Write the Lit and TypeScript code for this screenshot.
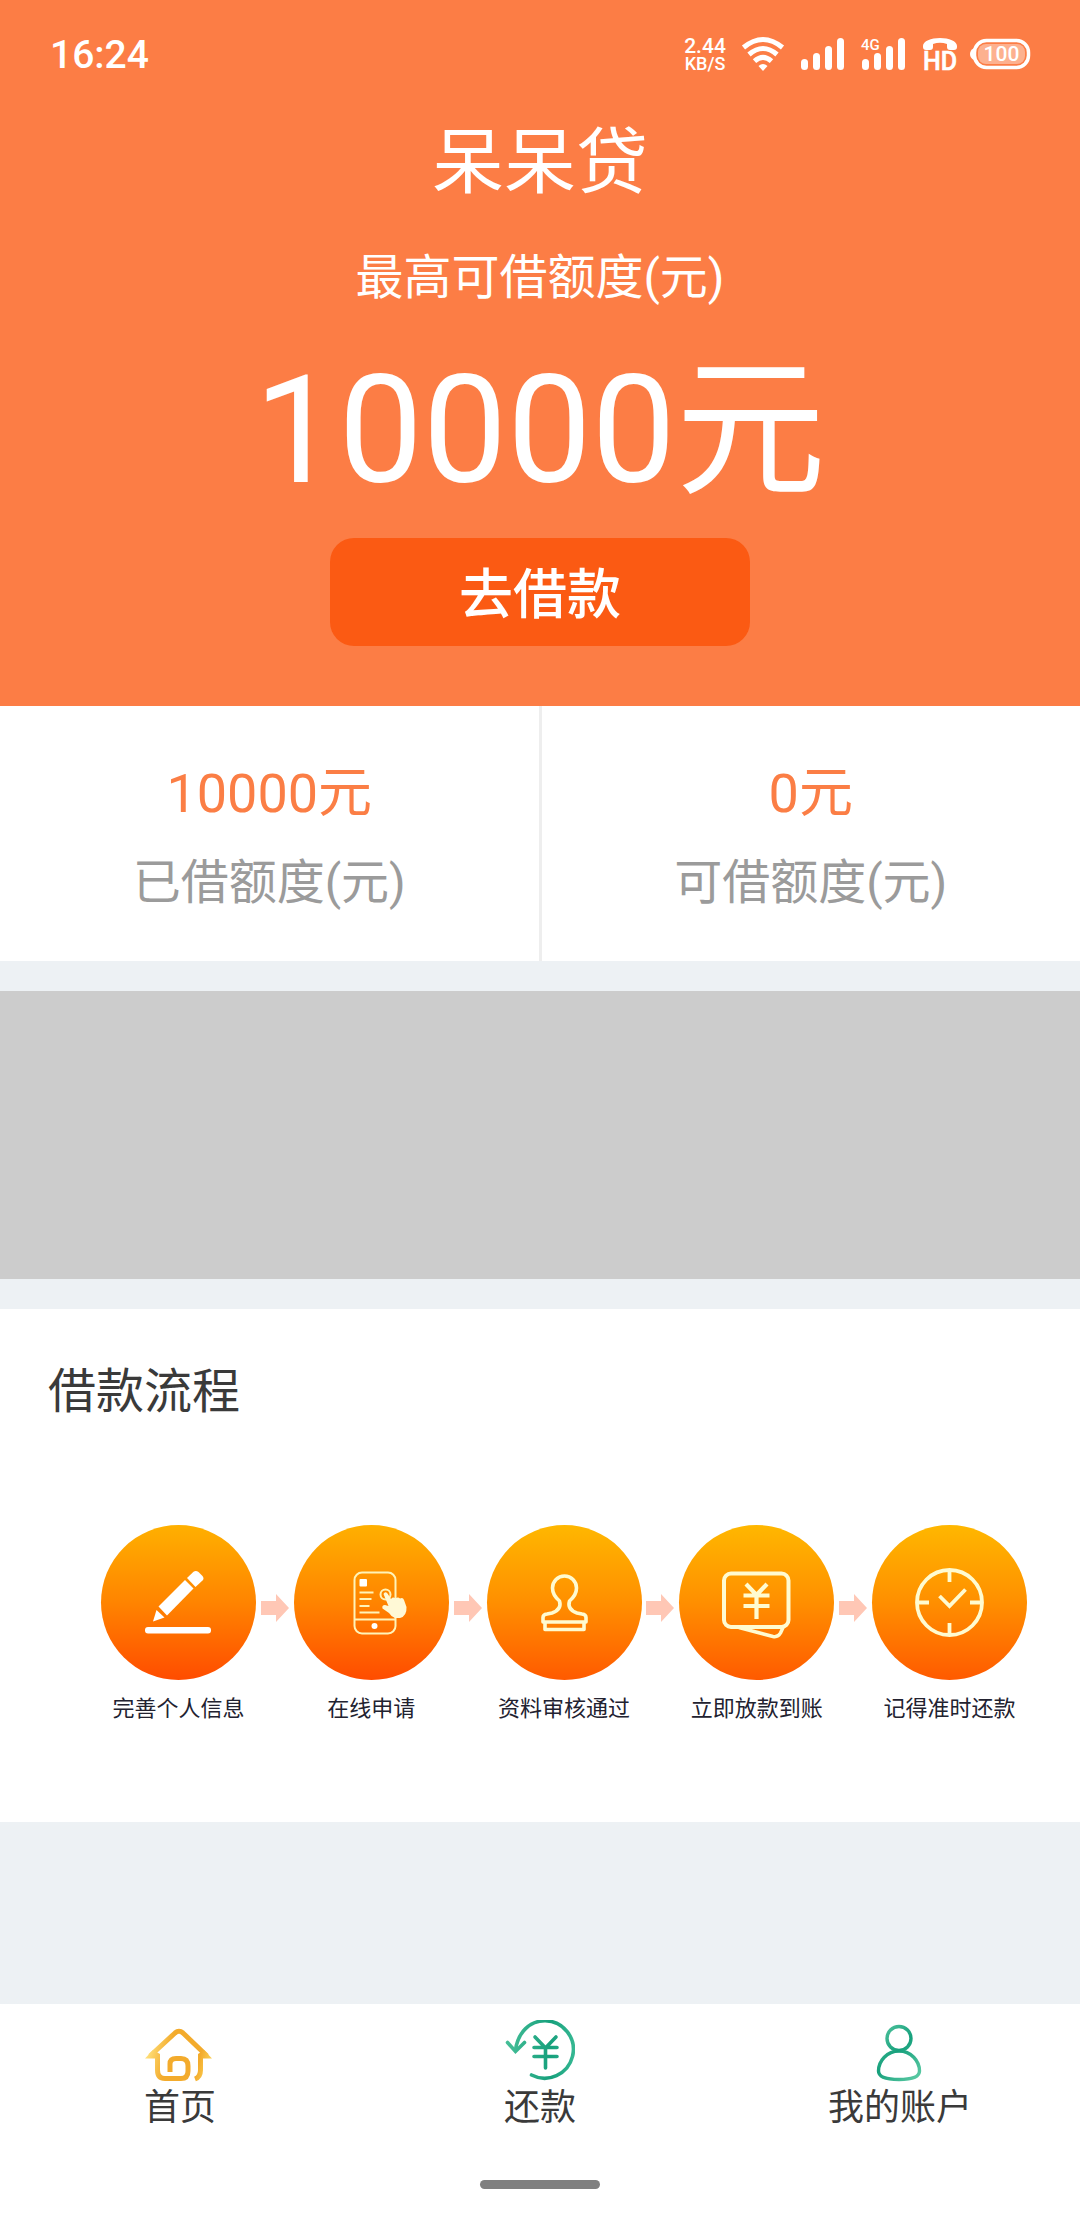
import { LitElement, html, css, svg } from "lit";
import { customElement } from "lit/decorators.js";

const bars = svg`
  <rect x="0" y="21" width="7" height="11" rx="3.5" />
  <rect x="12" y="15" width="7" height="17" rx="3.5" />
  <rect x="24" y="8" width="7" height="24" rx="3.5" />
  <rect x="36" y="0" width="7" height="32" rx="3.5" />`;

@customElement("status-bar")
class StatusBar extends LitElement {
  static styles = css`
    :host {
      display: flex;
      align-items: center;
      justify-content: space-between;
      height: 108px;
      padding: 0 50px;
      color: #fff;
      font-weight: 500;
      font-family: Roboto, sans-serif;
    }
    .time {
      font-size: 39px;
      line-height: 48px;
      padding-top: 2px;
    }
    .icons {
      display: flex;
      align-items: center;
      gap: 16px;
    }
    .speed {
      display: flex;
      flex-direction: column;
      align-items: center;
      width: 42px;
      font-size: 21px;
      line-height: 19px;
    }
    .unit {
      font-size: 18px;
      line-height: 16px;
    }
    svg {
      display: block;
      fill: #fff;
      overflow: visible;
    }
    text {
      font-family: Roboto, sans-serif;
      font-weight: 500;
    }
  `;
  render() {
    return html`
      <span class="time">16:24</span>
      <div class="icons">
        <span class="speed"><span>2.44</span><span class="unit">KB/S</span></span>
        <svg width="42" height="34" viewBox="0 0 42 34" aria-label="Wi-Fi">
          <g fill="none" stroke="#fff" stroke-width="5">
            <path d="M1.500 10.500Q21 -5.500 40.500 10.500" />
            <path d="M7 17.500Q21 5.500 35 17.500" />
            <path d="M12.500 24.200Q21 16.500 29.500 24.200" />
          </g>
          <path d="M16.500 29Q21 25 25.500 29L21 34Z" />
        </svg>
        <svg width="44" height="32" viewBox="-1 0 44 32" aria-label="Signal">${bars}</svg>
        <svg width="44" height="32" viewBox="-2 0 44 32" aria-label="4G signal">
          ${bars}
          <text x="-1" y="12" font-size="15">4G</text>
        </svg>
        <svg width="34" height="32" viewBox="-3 0 34 32" aria-label="HD voice">
          <path d="M0 8C0 3 8 0 17 0S34 3 34 8V9Q34 12 31 12H27Q24 12 24 9V6Q17 3.500 10 6V9Q10 12 7 12H3Q0 12 0 9Z" />
          <text x="17" y="32" font-size="25" stroke="#fff" stroke-width="0.600" text-anchor="middle">HD</text>
        </svg>
        <svg width="60" height="32" viewBox="0 0 60 32" aria-label="Battery">
          <path d="M4 10Q0 12 0 16T4 22Z" />
          <rect x="4.500" y="2.500" width="54" height="27" rx="12" fill="none" stroke="#fff" stroke-width="3.500" />
          <rect x="8" y="6" width="47" height="20" rx="8" fill-opacity=".4" />
          <text x="31.500" y="23" font-size="21" text-anchor="middle">100</text>
        </svg>
      </div>
    `;
  }
}

const stepIcons = [
  svg`<g fill="#fff">
    <path d="M52 96.500L55.500 85L63.500 92.500Z" />
    <path d="M57.500 81.500L84 55L92.500 63.500L66 90.500Z" />
    <path d="M86 53L92.500 46.700Q95 45 97.500 47L101.500 51Q103.500 53.500 101.500 55.500L94.500 62Z" />
    <rect x="44" y="102" width="66" height="6.500" rx="3" /></g>`,
  svg`<g fill="none" stroke="#fff3b8" stroke-width="2">
    <rect x="60.500" y="47.500" width="41" height="61" rx="7.500" />
    <path d="M60.500 94.500H101.500M65.500 67.500H79.500M65.500 74H77.500M65.500 81H75.500M65.500 87.500H85.500" />
    <circle cx="91.500" cy="69.500" r="5" /></g>
    <rect x="65.500" y="54" width="7.500" height="7.500" rx="1" fill="#fff" />
    <circle cx="80.500" cy="101" r="3" fill="#fff" />
    <path d="M89.500 69Q91 66 93.500 68.500L97 74Q99 71.500 101.500 73.500Q104 71.500 106 73.500Q109 72 110 75L112.500 82Q113 91 106 93H101Q97 91.500 95 88L88.500 83.500Q87.500 80 91 80L94.500 81Z" fill="#fff9d6" />`,
  svg`<g fill="none" stroke="#fffbd0" stroke-width="3.600" stroke-linejoin="round">
    <path d="M56 95V92.500Q56 89.500 60 89L65 88Q75 84.500 72.500 76Q65.500 70 65.500 63A12 12 0 0 1 89.500 63Q89.500 70 82.500 76Q80 84.500 90 88L95 89Q99 89.500 99 92.500V97H56Z" />
    <path d="M58 97V104.500H97V97" /></g>`,
  svg`<g fill="none" stroke="#fffbd0" stroke-width="4" stroke-linejoin="round">
    <rect x="45" y="48.500" width="64.500" height="53.500" rx="7" />
    <path d="M60 102.500L94 111.500Q99 112.500 101.500 108L104 102.500" stroke-width="3.500" />
    <path d="M67 59L77.500 70L88 59M77.500 69V94M64.500 70.500H90.500M64.500 81H90.500" stroke-width="4.200" stroke-linejoin="miter" /></g>`,
  svg`<g fill="none" stroke="#fffbd0" stroke-width="3.800">
    <circle cx="77.500" cy="77.500" r="32.500" />
    <path d="M77.500 44V57M77.500 98V111M44 77.500H57M98 77.500H111M67.500 71L77.500 81L93.500 64.500" /></g>`,
];

@customElement("process-step")
class ProcessStep extends LitElement {
  static properties = { label: {}, index: { type: Number } };
  declare label: string;
  declare index: number;
  static styles = css`
    :host {
      display: flex;
      flex-direction: column;
      align-items: center;
      gap: 15px;
    }
    svg {
      display: block;
      width: 155px;
      height: 155px;
      border-radius: 50%;
      background: linear-gradient(#ffb000, #ff8400 50%, #ff4c00);
    }
    .late {
      background: linear-gradient(#ffb700, #ff8f00 50%, #ff5a00);
    }
    .label {
      font-size: 22px;
      line-height: 28px;
      white-space: nowrap;
      color: #222230;
    }
  `;
  render() {
    return html`
      <svg class=${this.index > 1 ? "late" : ""} viewBox="0 0 155 155" aria-hidden="true">${stepIcons[this.index]}</svg>
      <span class="label">${this.label}</span>
    `;
  }
}

const tabs = [
  {
    label: "首页",
    icon: svg`<defs><linearGradient id="gold" gradientUnits="userSpaceOnUse" x1="2" y1="34" x2="69" y2="52">
        <stop offset="0" stop-color="#ffe07a" /><stop offset=".3" stop-color="#f3ab2c" />
        <stop offset=".75" stop-color="#f3ab2c" /><stop offset="1" stop-color="#ffe268" /></linearGradient></defs>
      <g fill="none" stroke="url(#gold)" stroke-width="5">
      <path d="M5 36L30 13Q34 9.500 38 13L62 36" />
      <path d="M0 38.500L8 30L15 34V38.500ZM67 38.500L59 30L53 34V38.500Z" fill="url(#gold)" stroke="none" />
      <path d="M12.500 34V50Q12.500 58.500 20 58.500H36Q43 58.500 43 51V46Q43 38.500 36 38.500H31Q25 38.500 25 44V52" />
      <path d="M55.500 35V50Q55.500 57 50 59" /></g>`,
  },
  {
    label: "还款",
    icon: svg`<defs><linearGradient id="teal" gradientUnits="userSpaceOnUse" x1="2" y1="0" x2="69" y2="0">
        <stop offset="0" stop-color="#45be97" /><stop offset=".65" stop-color="#16a07c" />
        <stop offset="1" stop-color="#35b792" /></linearGradient></defs>
      <g fill="none" stroke="url(#teal)" stroke-width="3.600" stroke-linecap="round">
      <path d="M10.500 30C13 12 25 .8 40 .8A28.700 28.700 0 1 1 26.500 55" />
      <path d="M2.500 22.500L10.500 31.500L19.500 22.500" />
      <path d="M30 17L40.500 28L51 17M29 27.500H52M29 36.500H52M40.500 27.500V48" /></g>`,
  },
  {
    label: "我的账户",
    icon: svg`<defs><linearGradient id="green" gradientUnits="userSpaceOnUse" x1="13" y1="8" x2="57" y2="50">
        <stop offset="0" stop-color="#55c6a0" /><stop offset=".5" stop-color="#16a07c" />
        <stop offset="1" stop-color="#55c6a0" /></linearGradient></defs>
      <g fill="none" stroke="url(#green)" stroke-width="3.400">
      <circle cx="34" cy="18.500" r="12" />
      <path d="M34 31C22 31 13.500 41 13.500 51Q13.500 59.500 34 59.500T54.500 51C54.500 41 46 31 34 31Z" /></g>`,
  },
];

@customElement("tab-bar")
class TabBar extends LitElement {
  static styles = css`
    :host {
      display: block;
      background: #fff;
      padding: 16px 0 43px;
    }
    nav {
      display: grid;
      grid-template-columns: repeat(3, 1fr);
    }
    a {
      display: flex;
      flex-direction: column;
      align-items: center;
      color: #3a3a3a;
      text-decoration: none;
      font-size: 36px;
      line-height: 48px;
    }
    svg {
      display: block;
      width: 70px;
      height: 64px;
    }
    .handle {
      width: 120px;
      height: 9px;
      border-radius: 5px;
      background: #808080;
      margin: 48px auto 0;
    }
  `;
  render() {
    return html`
      <nav>
        ${tabs.map(
          (t) => html`<a href="#"><svg viewBox="0 0 70 64" aria-hidden="true">${t.icon}</svg><span>${t.label}</span></a>`
        )}
      </nav>
      <div class="handle"></div>
    `;
  }
}

const steps = ["完善个人信息", "在线申请", "资料审核通过", "立即放款到账", "记得准时还款"];

@customElement("app-root")
class AppRoot extends LitElement {
  static styles = css`
    :host {
      display: flex;
      flex-direction: column;
      min-height: 100vh;
      background: #edf1f4;
      font-family: Roboto, "Noto Sans CJK SC", sans-serif;
    }
    header {
      background: #fc7d45;
      color: #fff;
      padding-bottom: 60px;
    }
    .hero {
      display: flex;
      flex-direction: column;
      align-items: center;
      text-align: center;
    }
    h1,
    h2,
    p {
      margin: 0;
      font-weight: 400;
    }
    h1 {
      font-size: 72px;
      line-height: 108px;
      margin-top: 1px;
    }
    .caption {
      font-size: 48px;
      line-height: 72px;
      margin-top: 25px;
    }
    .amount {
      font-size: 150px;
      line-height: 180px;
      margin: 27px 0 17px;
    }
    button {
      width: 420px;
      max-width: 90%;
      height: 108px;
      padding: 0 0 4px;
      border: 0;
      border-radius: 24px;
      background: #fb5a13;
      color: #fff;
      font: inherit;
      font-size: 54px;
      font-weight: 500;
    }
    .stats {
      display: grid;
      grid-template-columns: 1fr 1fr;
      column-gap: 3px;
      background: linear-gradient(#eee, #eee) center / 3px 100% no-repeat #fff;
    }
    .stat {
      padding: 47px 0 42px;
      text-align: center;
    }
    .value {
      font-size: 54px;
      line-height: 81px;
      color: #fb7e45;
    }
    .name {
      font-size: 48px;
      line-height: 72px;
      margin-top: 13px;
      color: #9b9b9b;
    }
    .banner {
      height: 288px;
      margin: 30px 0;
      background: #ccc;
    }
    .process {
      background: #fff;
      padding: 47px 48px 99px;
    }
    h2 {
      font-size: 48px;
      line-height: 72px;
      color: #3a3a3a;
    }
    .steps {
      display: flex;
      justify-content: space-between;
      margin: 97px 5px 0 53px;
    }
    .steps svg {
      display: block;
      width: 28px;
      height: 28px;
      margin-top: 69px;
    }
    .rest {
      flex: 1;
    }
  `;
  render() {
    return html`
      <header>
        <status-bar></status-bar>
        <div class="hero">
          <h1>呆呆贷</h1>
          <p class="caption">最高可借额度(元)</p>
          <p class="amount">10000元</p>
          <button type="button">去借款</button>
        </div>
      </header>
      <section class="stats">
        <div class="stat"><p class="value">10000元</p><p class="name">已借额度(元)</p></div>
        <div class="stat"><p class="value">0元</p><p class="name">可借额度(元)</p></div>
      </section>
      <div class="banner"></div>
      <section class="process">
        <h2>借款流程</h2>
        <div class="steps">
          ${steps.map(
            (s, i) => html`
              ${i
                ? html`<svg viewBox="0 0 28 28" aria-hidden="true"><path d="M0 7H15V0L28 14L15 28V21H0Z" fill="#ffc7b5" /></svg>`
                : ""}
              <process-step .label=${s} .index=${i}></process-step>
            `
          )}
        </div>
      </section>
      <div class="rest"></div>
      <tab-bar></tab-bar>
    `;
  }
}
